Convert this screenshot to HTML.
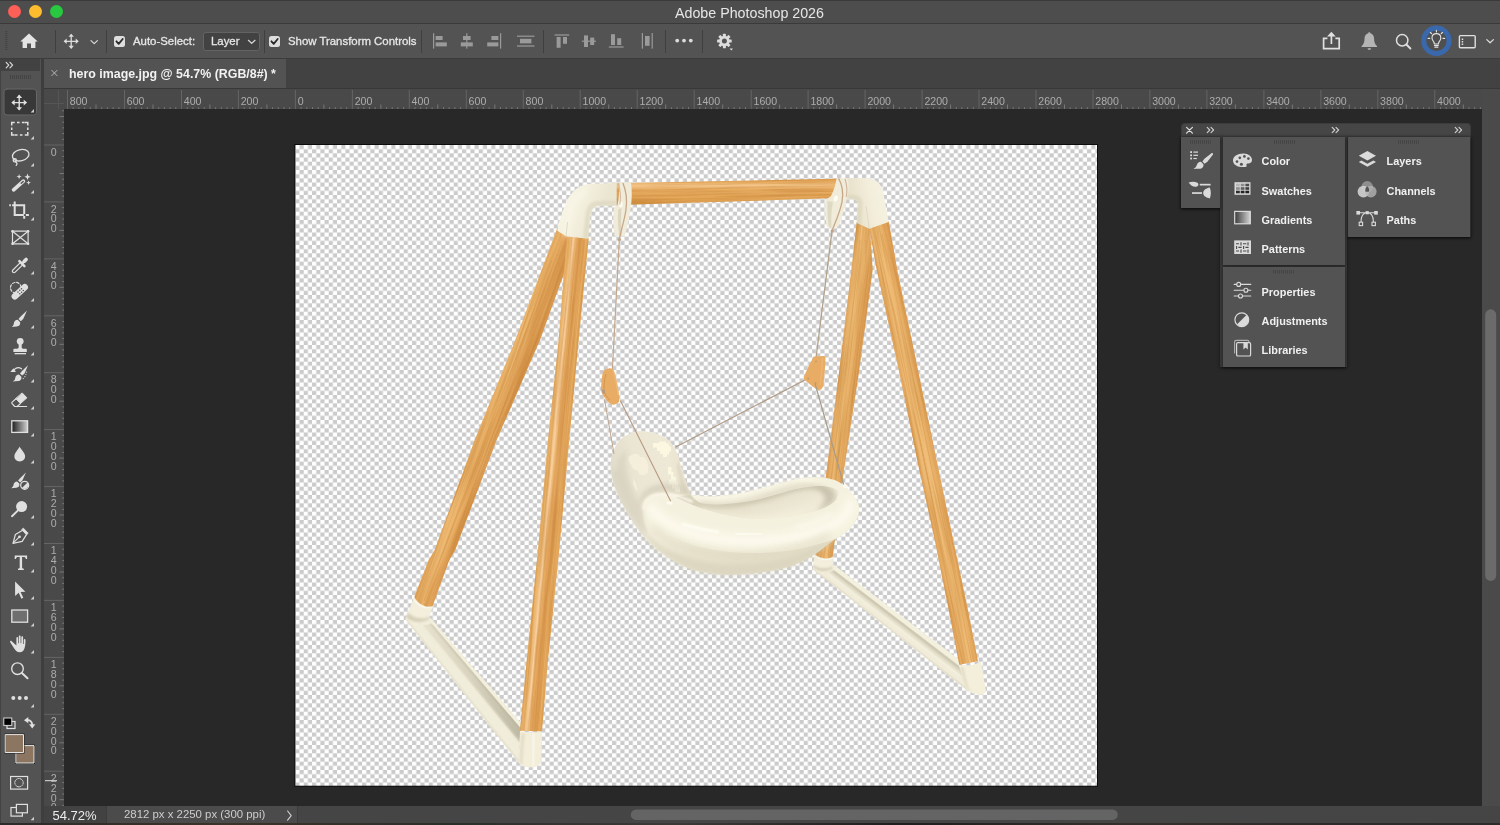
<!DOCTYPE html>
<html><head><meta charset="utf-8"><title>Adobe Photoshop 2026</title>
<style>
*{box-sizing:border-box;margin:0;padding:0}
html,body{width:1500px;height:825px;overflow:hidden;background:#282828;font-family:"Liberation Sans",sans-serif;}
.a{position:absolute}
svg{position:absolute;overflow:visible}
#titlebar{left:0;top:0;width:1500px;height:24px;background:#4d4d4d;border-top:1px solid #3a3a3a;border-bottom:1px solid #3a3a3a}
#title{left:675px;top:4.700px;color:#e6e6e6;font-size:14.25px;white-space:nowrap}
.tl{width:13px;height:13px;border-radius:50%;top:5px}
#optbar{left:0;top:24px;width:1500px;height:35px;background:#535353;border-bottom:1px solid #3c3c3c}
.vsep{width:1px;background:#3f3f3f;top:30px;height:23px}
.otext{color:#e6e6e6;font-size:11.4px;top:35px;white-space:nowrap;-webkit-text-stroke:0.3px #e6e6e6}
.cb{width:11px;height:11px;border-radius:2.5px;background:#dedede;top:36px}
#tabbar{left:40px;top:59px;width:1460px;height:30px;background:#424242;border-bottom:1px solid #383838}
#tab{left:44px;top:59px;width:242px;height:29px;background:#535353}
#tabtext{left:69px;top:66.700px;color:#f2f2f2;font-size:12.4px;font-weight:bold;white-space:nowrap}
#tools{left:0;top:59px;width:40.500px;height:766px;background:#535353;border-left:1px solid #424242}
#toolshead{left:0;top:59px;width:40px;height:12px;background:#424242}
#gap{left:40.500px;top:59px;width:3.500px;height:766px;background:#3e3e3e}
#hruler{left:44px;top:89px;width:1438px;height:20px;background:#494949}
#vruler{left:44px;top:109px;width:20px;height:697px;background:#494949}
#status{left:44px;top:806px;width:1456px;height:19px;background:#424242}
#vscroll{left:1482px;top:89px;width:18px;height:717px;background:#4a4a4a}
#root{position:absolute;left:0;top:0;width:1500px;height:825px;will-change:transform}
</style></head><body><div id="root">

<div id="titlebar" class="a"></div>
<div class="a tl" style="left:8px;background:#fe5f57"></div>
<div class="a tl" style="left:29px;background:#febc2e"></div>
<div class="a tl" style="left:50px;background:#28c840"></div>
<div id="title" class="a">Adobe Photoshop 2026</div>
<div id="optbar" class="a"></div>
<div class="a vsep" style="left:55px"></div>
<div class="a vsep" style="left:106px"></div>
<div class="a vsep" style="left:264px"></div>
<div class="a vsep" style="left:421px"></div>
<div class="a vsep" style="left:543px"></div>
<div class="a vsep" style="left:665px"></div>
<div class="a vsep" style="left:702px"></div>
<div class="a cb" style="left:114px"></div>
<div class="a otext" style="left:133px">Auto-Select:</div>
<div class="a" style="left:203px;top:32px;width:57px;height:19px;background:#424242;border:1px solid #636363;border-radius:3px"></div>
<div class="a otext" style="left:211px">Layer</div>
<div class="a cb" style="left:269px"></div>
<div class="a otext" style="left:288px">Show Transform Controls</div>
<div id="tabbar" class="a"></div><div id="tab" class="a"></div>
<div id="tabtext" class="a">hero image.jpg @ 54.7% (RGB/8#) *</div>
<div id="tools" class="a"></div><div id="toolshead" class="a"></div><div id="gap" class="a"></div>
<div id="hruler" class="a"></div><div id="vruler" class="a"></div>
<div id="vscroll" class="a"></div>
<div id="status" class="a"></div>

<svg class="a" style="left:0;top:0" width="1500" height="825" viewBox="0 0 1500 825">
<clipPath id="rc"><rect x="44" y="89" width="1438" height="717"/></clipPath><g clip-path="url(#rc)">
<path d="M44 103.500h20M58.500 90v19" stroke="#555" stroke-width="1" fill="none"/>
<path d="M67.5 90v19M124.5 90v19M181.5 90v19M238.4 90v19M295.4 90v19M352.4 90v19M409.3 90v19M466.3 90v19M523.3 90v19M580.2 90v19M637.2 90v19M694.2 90v19M751.2 90v19M808.1 90v19M865.1 90v19M922.1 90v19M979.0 90v19M1036.0 90v19M1093.0 90v19M1149.9 90v19M1206.9 90v19M1263.9 90v19M1320.9 90v19M1377.8 90v19M1434.8 90v19M44 145.0h20M44 201.9h20M44 258.9h20M44 315.8h20M44 372.7h20M44 429.6h20M44 486.6h20M44 543.5h20M44 600.4h20M44 657.4h20M44 714.3h20M44 771.2h20" stroke="#656565" stroke-width="1" fill="none"/>
<path d="M96.0 109v-4.5M153.0 109v-4.5M209.9 109v-4.5M266.9 109v-4.5M323.9 109v-4.5M380.9 109v-4.5M437.8 109v-4.5M494.8 109v-4.5M551.8 109v-4.5M608.7 109v-4.5M665.7 109v-4.5M722.7 109v-4.5M779.6 109v-4.5M836.6 109v-4.5M893.6 109v-4.5M950.6 109v-4.5M1007.5 109v-4.5M1064.5 109v-4.5M1121.5 109v-4.5M1178.4 109v-4.5M1235.4 109v-4.5M1292.4 109v-4.5M1349.3 109v-4.5M1406.3 109v-4.5M1463.3 109v-4.5M64 116.5h-4.5M64 173.5h-4.5M64 230.4h-4.5M64 287.3h-4.5M64 344.3h-4.5M64 401.2h-4.5M64 458.1h-4.5M64 515.0h-4.5M64 572.0h-4.5M64 628.9h-4.5M64 685.8h-4.5M64 742.8h-4.5M64 799.7h-4.5" stroke="#777" stroke-width="1" fill="none"/>
<path d="M73.2 109v-1.7M78.9 109v-1.7M84.6 109v-1.7M90.3 109v-1.7M101.7 109v-1.7M107.4 109v-1.7M113.1 109v-1.7M118.8 109v-1.7M130.2 109v-1.7M135.9 109v-1.7M141.6 109v-1.7M147.3 109v-1.7M158.7 109v-1.7M164.4 109v-1.7M170.1 109v-1.7M175.8 109v-1.7M187.2 109v-1.7M192.9 109v-1.7M198.6 109v-1.7M204.2 109v-1.7M215.6 109v-1.7M221.3 109v-1.7M227.0 109v-1.7M232.7 109v-1.7M244.1 109v-1.7M249.8 109v-1.7M255.5 109v-1.7M261.2 109v-1.7M272.6 109v-1.7M278.3 109v-1.7M284.0 109v-1.7M289.7 109v-1.7M301.1 109v-1.7M306.8 109v-1.7M312.5 109v-1.7M318.2 109v-1.7M329.6 109v-1.7M335.3 109v-1.7M341.0 109v-1.7M346.7 109v-1.7M358.1 109v-1.7M363.8 109v-1.7M369.5 109v-1.7M375.2 109v-1.7M386.6 109v-1.7M392.2 109v-1.7M397.9 109v-1.7M403.6 109v-1.7M415.0 109v-1.7M420.7 109v-1.7M426.4 109v-1.7M432.1 109v-1.7M443.5 109v-1.7M449.2 109v-1.7M454.9 109v-1.7M460.6 109v-1.7M472.0 109v-1.7M477.7 109v-1.7M483.4 109v-1.7M489.1 109v-1.7M500.5 109v-1.7M506.2 109v-1.7M511.9 109v-1.7M517.6 109v-1.7M529.0 109v-1.7M534.7 109v-1.7M540.4 109v-1.7M546.1 109v-1.7M557.5 109v-1.7M563.2 109v-1.7M568.9 109v-1.7M574.6 109v-1.7M585.9 109v-1.7M591.6 109v-1.7M597.3 109v-1.7M603.0 109v-1.7M614.4 109v-1.7M620.1 109v-1.7M625.8 109v-1.7M631.5 109v-1.7M642.9 109v-1.7M648.6 109v-1.7M654.3 109v-1.7M660.0 109v-1.7M671.4 109v-1.7M677.1 109v-1.7M682.8 109v-1.7M688.5 109v-1.7M699.9 109v-1.7M705.6 109v-1.7M711.3 109v-1.7M717.0 109v-1.7M728.4 109v-1.7M734.1 109v-1.7M739.8 109v-1.7M745.5 109v-1.7M756.9 109v-1.7M762.6 109v-1.7M768.3 109v-1.7M773.9 109v-1.7M785.3 109v-1.7M791.0 109v-1.7M796.7 109v-1.7M802.4 109v-1.7M813.8 109v-1.7M819.5 109v-1.7M825.2 109v-1.7M830.9 109v-1.7M842.3 109v-1.7M848.0 109v-1.7M853.7 109v-1.7M859.4 109v-1.7M870.8 109v-1.7M876.5 109v-1.7M882.2 109v-1.7M887.9 109v-1.7M899.3 109v-1.7M905.0 109v-1.7M910.7 109v-1.7M916.4 109v-1.7M927.8 109v-1.7M933.5 109v-1.7M939.2 109v-1.7M944.9 109v-1.7M956.3 109v-1.7M961.9 109v-1.7M967.6 109v-1.7M973.3 109v-1.7M984.7 109v-1.7M990.4 109v-1.7M996.1 109v-1.7M1001.8 109v-1.7M1013.2 109v-1.7M1018.9 109v-1.7M1024.6 109v-1.7M1030.3 109v-1.7M1041.7 109v-1.7M1047.4 109v-1.7M1053.1 109v-1.7M1058.8 109v-1.7M1070.2 109v-1.7M1075.9 109v-1.7M1081.6 109v-1.7M1087.3 109v-1.7M1098.7 109v-1.7M1104.4 109v-1.7M1110.1 109v-1.7M1115.8 109v-1.7M1127.2 109v-1.7M1132.9 109v-1.7M1138.6 109v-1.7M1144.3 109v-1.7M1155.6 109v-1.7M1161.3 109v-1.7M1167.0 109v-1.7M1172.7 109v-1.7M1184.1 109v-1.7M1189.8 109v-1.7M1195.5 109v-1.7M1201.2 109v-1.7M1212.6 109v-1.7M1218.3 109v-1.7M1224.0 109v-1.7M1229.7 109v-1.7M1241.1 109v-1.7M1246.8 109v-1.7M1252.5 109v-1.7M1258.2 109v-1.7M1269.6 109v-1.7M1275.3 109v-1.7M1281.0 109v-1.7M1286.7 109v-1.7M1298.1 109v-1.7M1303.8 109v-1.7M1309.5 109v-1.7M1315.2 109v-1.7M1326.6 109v-1.7M1332.3 109v-1.7M1338.0 109v-1.7M1343.6 109v-1.7M1355.0 109v-1.7M1360.7 109v-1.7M1366.4 109v-1.7M1372.1 109v-1.7M1383.5 109v-1.7M1389.2 109v-1.7M1394.9 109v-1.7M1400.6 109v-1.7M1412.0 109v-1.7M1417.7 109v-1.7M1423.4 109v-1.7M1429.1 109v-1.7M1440.5 109v-1.7M1446.2 109v-1.7M1451.9 109v-1.7M1457.6 109v-1.7M1469.0 109v-1.7M1474.7 109v-1.7M1480.4 109v-1.7M64 110.8h-1.7M64 122.2h-1.7M64 127.9h-1.7M64 133.6h-1.7M64 139.3h-1.7M64 150.7h-1.7M64 156.4h-1.7M64 162.1h-1.7M64 167.8h-1.7M64 179.2h-1.7M64 184.9h-1.7M64 190.5h-1.7M64 196.2h-1.7M64 207.6h-1.7M64 213.3h-1.7M64 219.0h-1.7M64 224.7h-1.7M64 236.1h-1.7M64 241.8h-1.7M64 247.5h-1.7M64 253.2h-1.7M64 264.6h-1.7M64 270.2h-1.7M64 275.9h-1.7M64 281.6h-1.7M64 293.0h-1.7M64 298.7h-1.7M64 304.4h-1.7M64 310.1h-1.7M64 321.5h-1.7M64 327.2h-1.7M64 332.9h-1.7M64 338.6h-1.7M64 349.9h-1.7M64 355.6h-1.7M64 361.3h-1.7M64 367.0h-1.7M64 378.4h-1.7M64 384.1h-1.7M64 389.8h-1.7M64 395.5h-1.7M64 406.9h-1.7M64 412.6h-1.7M64 418.3h-1.7M64 424.0h-1.7M64 435.3h-1.7M64 441.0h-1.7M64 446.7h-1.7M64 452.4h-1.7M64 463.8h-1.7M64 469.5h-1.7M64 475.2h-1.7M64 480.9h-1.7M64 492.3h-1.7M64 498.0h-1.7M64 503.7h-1.7M64 509.4h-1.7M64 520.7h-1.7M64 526.4h-1.7M64 532.1h-1.7M64 537.8h-1.7M64 549.2h-1.7M64 554.9h-1.7M64 560.6h-1.7M64 566.3h-1.7M64 577.7h-1.7M64 583.4h-1.7M64 589.1h-1.7M64 594.7h-1.7M64 606.1h-1.7M64 611.8h-1.7M64 617.5h-1.7M64 623.2h-1.7M64 634.6h-1.7M64 640.3h-1.7M64 646.0h-1.7M64 651.7h-1.7M64 663.1h-1.7M64 668.8h-1.7M64 674.4h-1.7M64 680.1h-1.7M64 691.5h-1.7M64 697.2h-1.7M64 702.9h-1.7M64 708.6h-1.7M64 720.0h-1.7M64 725.7h-1.7M64 731.4h-1.7M64 737.1h-1.7M64 748.5h-1.7M64 754.2h-1.7M64 759.8h-1.7M64 765.5h-1.7M64 776.9h-1.7M64 782.6h-1.7M64 788.3h-1.7M64 794.0h-1.7M64 805.4h-1.7" stroke="#7c7c7c" stroke-width="1" fill="none"/>
<g fill="#acacac" font-size="10.600" font-family="Liberation Sans, sans-serif">
<text x="69.8" y="104.700">800</text>
<text x="126.8" y="104.700">600</text>
<text x="183.8" y="104.700">400</text>
<text x="240.7" y="104.700">200</text>
<text x="297.7" y="104.700">0</text>
<text x="354.7" y="104.700">200</text>
<text x="411.6" y="104.700">400</text>
<text x="468.6" y="104.700">600</text>
<text x="525.6" y="104.700">800</text>
<text x="582.5" y="104.700">1000</text>
<text x="639.5" y="104.700">1200</text>
<text x="696.5" y="104.700">1400</text>
<text x="753.5" y="104.700">1600</text>
<text x="810.4" y="104.700">1800</text>
<text x="867.4" y="104.700">2000</text>
<text x="924.4" y="104.700">2200</text>
<text x="981.3" y="104.700">2400</text>
<text x="1038.3" y="104.700">2600</text>
<text x="1095.3" y="104.700">2800</text>
<text x="1152.2" y="104.700">3000</text>
<text x="1209.2" y="104.700">3200</text>
<text x="1266.2" y="104.700">3400</text>
<text x="1323.2" y="104.700">3600</text>
<text x="1380.1" y="104.700">3800</text>
<text x="1437.1" y="104.700">4000</text>
<g text-anchor="middle">
<text x="53.800" y="155.7">0</text>
<text x="53.800" y="212.6">2</text>
<text x="53.800" y="222.4">0</text>
<text x="53.800" y="232.2">0</text>
<text x="53.800" y="269.6">4</text>
<text x="53.800" y="279.4">0</text>
<text x="53.800" y="289.2">0</text>
<text x="53.800" y="326.5">6</text>
<text x="53.800" y="336.3">0</text>
<text x="53.800" y="346.1">0</text>
<text x="53.800" y="383.4">8</text>
<text x="53.800" y="393.2">0</text>
<text x="53.800" y="403.0">0</text>
<text x="53.800" y="440.3">1</text>
<text x="53.800" y="450.1">0</text>
<text x="53.800" y="459.9">0</text>
<text x="53.800" y="469.7">0</text>
<text x="53.800" y="497.3">1</text>
<text x="53.800" y="507.1">2</text>
<text x="53.800" y="516.9">0</text>
<text x="53.800" y="526.7">0</text>
<text x="53.800" y="554.2">1</text>
<text x="53.800" y="564.0">4</text>
<text x="53.800" y="573.8">0</text>
<text x="53.800" y="583.6">0</text>
<text x="53.800" y="611.1">1</text>
<text x="53.800" y="620.9">6</text>
<text x="53.800" y="630.7">0</text>
<text x="53.800" y="640.5">0</text>
<text x="53.800" y="668.1">1</text>
<text x="53.800" y="677.9">8</text>
<text x="53.800" y="687.7">0</text>
<text x="53.800" y="697.5">0</text>
<text x="53.800" y="725.0">2</text>
<text x="53.800" y="734.8">0</text>
<text x="53.800" y="744.6">0</text>
<text x="53.800" y="754.4">0</text>
<text x="53.800" y="781.9">2</text>
<text x="53.800" y="791.7">2</text>
<text x="53.800" y="801.5">0</text>
<text x="53.800" y="811.3">0</text>
</g></g></g></svg>

<svg class="a" style="left:0;top:0" width="1500" height="825" viewBox="0 0 1500 825">
<defs>
<pattern id="chk" x="295.4" y="145" width="8.3333" height="8.3333" patternUnits="userSpaceOnUse">
<rect width="8.3333" height="8.3333" fill="#fff"/><rect x="4.1667" width="4.1667" height="4.1667" fill="#cbcbcb"/><rect y="4.1667" width="4.1667" height="4.1667" fill="#cbcbcb"/>
</pattern>
<clipPath id="cv"><rect x="295.4" y="145" width="801.6" height="640.7"/></clipPath>
<!-- wood gradients -->
<linearGradient id="wbar" x1="0" y1="0" x2="0.02" y2="1">
<stop offset="0" stop-color="#d69448"/><stop offset=".1" stop-color="#e8aa5c"/><stop offset=".27" stop-color="#f3c488"/><stop offset=".42" stop-color="#e9ad62"/><stop offset=".72" stop-color="#e2a456"/><stop offset=".92" stop-color="#d99848"/><stop offset="1" stop-color="#cb8a3c"/>
</linearGradient>
<linearGradient id="wfl" gradientUnits="userSpaceOnUse" x1="548" y1="440" x2="569.3" y2="442">
<stop offset="0" stop-color="#e2a458"/><stop offset=".14" stop-color="#ebb56c"/><stop offset=".3" stop-color="#f9d0a0"/><stop offset=".42" stop-color="#e7ab62"/><stop offset=".62" stop-color="#dc9b51"/><stop offset=".82" stop-color="#e7ac60"/><stop offset="1" stop-color="#e4a558"/>
</linearGradient>
<linearGradient id="wbl" gradientUnits="userSpaceOnUse" x1="474.7" y1="440" x2="495" y2="447.500">
<stop offset="0" stop-color="#e2a55a"/><stop offset=".2" stop-color="#ecb66e"/><stop offset=".45" stop-color="#e8ae64"/><stop offset=".7" stop-color="#e0a258"/><stop offset="1" stop-color="#d7964c"/>
</linearGradient>
<linearGradient id="wfr" gradientUnits="userSpaceOnUse" x1="919.3" y1="470" x2="938" y2="466">
<stop offset="0" stop-color="#e0a258"/><stop offset=".25" stop-color="#ebb46c"/><stop offset=".5" stop-color="#efbc76"/><stop offset=".75" stop-color="#e8af66"/><stop offset="1" stop-color="#de9f54"/>
</linearGradient>
<linearGradient id="wbr" gradientUnits="userSpaceOnUse" x1="839.3" y1="370" x2="859" y2="372.300">
<stop offset="0" stop-color="#e0a35a"/><stop offset=".3" stop-color="#ecb972"/><stop offset=".55" stop-color="#e9b26a"/><stop offset=".8" stop-color="#e0a45a"/><stop offset="1" stop-color="#d89a50"/>
</linearGradient>
<!-- cream gradients -->
<linearGradient id="cel" gradientUnits="userSpaceOnUse" x1="560" y1="200" x2="600" y2="215">
<stop offset="0" stop-color="#f8f5e7"/><stop offset=".45" stop-color="#f5f1df"/><stop offset="1" stop-color="#ebe6d2"/>
</linearGradient>
<linearGradient id="cer" gradientUnits="userSpaceOnUse" x1="855" y1="205" x2="888" y2="198">
<stop offset="0" stop-color="#e9e3cd"/><stop offset=".5" stop-color="#f3eedb"/><stop offset="1" stop-color="#f6f2e2"/>
</linearGradient>
<linearGradient id="seatg" gradientUnits="userSpaceOnUse" x1="700" y1="490" x2="720" y2="580">
<stop offset="0" stop-color="#f4f0de"/><stop offset=".4" stop-color="#f5f1df"/><stop offset=".62" stop-color="#ece7d2"/><stop offset="1" stop-color="#e2dcc6"/>
</linearGradient>
<linearGradient id="bowlg" gradientUnits="userSpaceOnUse" x1="760" y1="483" x2="772" y2="520">
<stop offset="0" stop-color="#d8d2bb"/><stop offset=".45" stop-color="#e6e1cc"/><stop offset="1" stop-color="#f0ebd8"/>
</linearGradient>
<linearGradient id="lobeg" gradientUnits="userSpaceOnUse" x1="612" y1="470" x2="690" y2="455">
<stop offset="0" stop-color="#e2ddcb"/><stop offset=".3" stop-color="#ebe6d4"/><stop offset=".7" stop-color="#eee9d6"/><stop offset="1" stop-color="#e8e1cb"/>
</linearGradient>
<filter id="b0" x="-20%" y="-20%" width="140%" height="140%"><feGaussianBlur stdDeviation="0.600"/></filter>
<filter id="b1" x="-20%" y="-20%" width="140%" height="140%"><feGaussianBlur stdDeviation="1.2"/></filter>
<filter id="b2" x="-20%" y="-20%" width="140%" height="140%"><feGaussianBlur stdDeviation="2.500"/></filter>
<filter id="b4" x="-30%" y="-30%" width="160%" height="160%"><feGaussianBlur stdDeviation="4.500"/></filter>
</defs>
<rect x="294.400" y="144" width="803.600" height="642.700" fill="#0c0c0c"/>
<rect x="295.400" y="145" width="801.600" height="640.700" fill="url(#chk)"/>
<g clip-path="url(#cv)">
<defs><filter id="grain" x="0" y="0" width="100%" height="100%" color-interpolation-filters="sRGB"><feTurbulence type="fractalNoise" baseFrequency="0.55 0.012" numOctaves="2" seed="7"/><feColorMatrix type="matrix" values="0 0 0 0 0.72  0 0 0 0 0.46  0 0 0 0 0.16  1.9 0 0 0 -0.78"/></filter><filter id="grainL" x="0" y="0" width="100%" height="100%" color-interpolation-filters="sRGB"><feTurbulence type="fractalNoise" baseFrequency="0.4 0.01" numOctaves="2" seed="23"/><feColorMatrix type="matrix" values="0 0 0 0 0.98  0 0 0 0 0.84  0 0 0 0 0.62  1.8 0 0 0 -0.85"/></filter><clipPath id="cwbl"><path d="M558 226L568 232 566 268 540 340 496.700 440 455.300 550 449.300 560 432.700 606c-7 2-15-2-18.400-9.300L428.700 560 434.700 550 474.700 440 515.300 340z"/></clipPath><clipPath id="cwbr"><path d="M856.700 222L870 228 872.700 270 859.300 370 844 470 832.700 556.700c-5.500 3-13 2-18-2.700L826.700 470 839.300 370 851.300 270z"/></clipPath><clipPath id="cwfl"><path d="M566.700 236L588.700 238 578.700 340 569.300 440 559.300 550 548 660 542 731.500 520 730.700 526.700 660 538 550 548 440 558.700 340z"/></clipPath><clipPath id="cwfr"><path d="M869.300 228L888.700 221 897.300 270 918 370 938.700 470 953.300 540 968 610 978 661.300 959.300 664.700 948.700 610 934.700 540 919.300 470 898.700 370 876.700 270z"/></clipPath><clipPath id="cwbar"><path d="M612 183.300L836.500 178.700c1.600 0 2 1.500 2 3L838.300 196c0 1.400-.6 2-2 2.100L612 205.200z"/></clipPath></defs>
<!-- ===== back-left base beam (cream) ===== -->
<g>
<path d="M405.3 619.3L518.7 762.7L520.7 722.7L429.3 616.7z" fill="#f1eddb"/>
<linearGradient id="lgr" gradientUnits="userSpaceOnUse" x1="425" y1="622" x2="516" y2="735"><stop offset="0" stop-color="#e6e1cd"/><stop offset=".5" stop-color="#d8d3be"/><stop offset="1" stop-color="#bfbaa4"/></linearGradient>
<path d="M423.4 625.5L519.7 742.7L520.4 727.9L431.8 623.7z" fill="url(#lgr)"/>
<path d="M422.5 625.7L519.6 744.3L519.8 741.1L424.4 625.3z" fill="#ebe6d2" opacity=".8" filter="url(#b1)"/>
<path d="M430.2 624.0L520.3 730.7L520.5 727.5L432.1 623.6z" fill="#b5b09a" opacity=".55" filter="url(#b1)"/>
<path d="M428.3 619.2L520.5 727.5L520.7 722.7L431.1 618.8z" fill="#f3efdd"/>
<path d="M405.3 619.3L518.7 762.7L518.9 759.5L407.2 619.1z" fill="#e4dfca" opacity=".7"/>
<path d="M414.300 596.700L405.300 619.300 416 625.500 429.300 616.700 433.300 605.300c-6 3.500-14 0-19-8.600z" fill="#f3efdc"/>
<path d="M408 612.500c6.500 6 14.500 7.500 22 4l-.7 2.200c-7 5-16 4.500-23.500-1.200z" fill="#d2ccb5" opacity=".85" filter="url(#b1)"/>
<path d="M414 599.500c4 6.500 11 9.500 18 7.500" stroke="#faf7ea" stroke-width="1.600" fill="none" opacity=".9"/>
</g>
<!-- ===== back-left leg (wood) ===== -->
<path d="M558 226L568 232 566 268 540 340 496.700 440 455.300 550 449.300 560 432.700 606c-7 2-15-2-18.400-9.300L428.700 560 434.700 550 474.700 440 515.300 340z" fill="url(#wbl)"/>
<g clip-path="url(#cwbl)"><rect x="395.0" y="210.0" width="200" height="420" transform="rotate(20.5 495 420)" filter="url(#grain)" opacity=".55"/><rect x="395.0" y="210.0" width="200" height="420" transform="rotate(20.5 495 420)" filter="url(#grainL)" opacity=".35"/></g>
<g stroke="#cf8f44" stroke-width=".8" opacity=".45" fill="none"><path d="M552 260L523 340 484 440 444 550 424 601"/><path d="M560 262L531 342 490 442 450 552 429 604"/><path d="M545 262L519 340"/></g>
<path d="M563 266L537 340 493.500 440 452 550" stroke="#c98a40" stroke-width="1.600" opacity=".45" fill="none"/>
<!-- ===== right-back beam (cream) ===== -->
<g>
<path d="M812.7 569.3L966.7 690.0L958.7 659.5L832.7 564.0z" fill="#f0ecd9"/>
<path d="M828.2 572.6L963.3 677.2L960.9 668.0L833.8 570.6z" fill="#e3dec9"/>
<path d="M831.9 571.3L961.7 671.1L960.6 666.8L834.5 570.3z" fill="#b9b39c" opacity=".7" filter="url(#b1)"/>
<path d="M830.6 567.3L960.6 666.8L958.7 659.5L835.2 565.9z" fill="#f4f0de"/>
<path d="M812.7 569.3L966.7 690.0L965.9 687.0L814.7 568.8z" fill="#e2ddc8" opacity=".7"/>
<path d="M827.1 573.0L963.8 679.0L963.2 676.6L828.6 572.4z" fill="#f7f4e4" opacity=".8" filter="url(#b1)"/>
<path d="M814.700 554L812.700 569.300 823 574.500 832.700 564 832.700 556.700c-5 3-13 1.500-18-2.700z" fill="#f3efdc"/>
<path d="M813.500 565c5.500 4 12.500 4.500 19 1.200l0 1.800c-6 4.500-13.500 4-19.600-.5z" fill="#d0cab3" opacity=".85" filter="url(#b1)"/>
<path d="M815 556c4.500 3.500 11.500 4.500 17.500 2.200" stroke="#faf7ea" stroke-width="1.400" fill="none" opacity=".9"/>
</g>
<!-- ===== right-back leg (wood) ===== -->
<path d="M856.700 222L870 228 872.700 270 859.300 370 844 470 832.700 556.700c-5.500 3-13 2-18-2.700L826.700 470 839.300 370 851.300 270z" fill="url(#wbr)"/>
<g clip-path="url(#cwbr)"><rect x="800.0" y="200.0" width="90" height="380" transform="rotate(6.5 845 390)" filter="url(#grain)" opacity=".55"/><rect x="800.0" y="200.0" width="90" height="380" transform="rotate(6.5 845 390)" filter="url(#grainL)" opacity=".35"/></g>
<g stroke="#cf8f44" stroke-width=".8" opacity=".45" fill="none"><path d="M860 240L857.500 270 845 370 832 470 820 553"/><path d="M866 240L866 270 853 370 839 470 828 556"/></g>
<!-- ===== front-left leg (wood) ===== -->
<path d="M566.700 236L588.700 238 578.700 340 569.300 440 559.300 550 548 660 542 731.500 520 730.700 526.700 660 538 550 548 440 558.700 340z" fill="url(#wfl)"/>
<g clip-path="url(#cwfl)"><rect x="500.0" y="220.0" width="110" height="530" transform="rotate(5.2 555 485)" filter="url(#grain)" opacity=".55"/><rect x="500.0" y="220.0" width="110" height="530" transform="rotate(5.2 555 485)" filter="url(#grainL)" opacity=".35"/></g>
<g stroke="#cc8b42" stroke-width=".8" opacity=".4" fill="none"><path d="M580 240L571 340 561.500 440 551.500 550 540 660 534.500 731"/><path d="M584 240L575 340 565.500 440 555.500 550 544 660 538.500 731"/></g>
<!-- front-left cap -->
<path d="M520 730.700c7 2.600 15 2.800 22 .8L540.700 762.700c-1.500 3.500-6 5-10 4.600-5-.2-10.500-2-12-4.600z" fill="#f3eeda"/>
<path d="M521.500 733c-1 10-1.500 20-2 29.500l3 2.500c.5-11 1.200-21 2.500-31.500z" fill="#dcd6bf" opacity=".7" filter="url(#b1)"/>
<path d="M534 733c-1 11-1.500 22-1.500 33.500" stroke="#fbf8ea" stroke-width="3" opacity=".8" filter="url(#b1)" fill="none"/>
<!-- ===== right-front leg (wood) ===== -->
<path d="M869.300 228L888.700 221 897.300 270 918 370 938.700 470 953.300 540 968 610 978 661.300 959.300 664.700 948.700 610 934.700 540 919.300 470 898.700 370 876.700 270z" fill="url(#wfr)"/>
<g clip-path="url(#cwfr)"><rect x="860.0" y="200.0" width="130" height="490" transform="rotate(-12 925 445)" filter="url(#grain)" opacity=".55"/><rect x="860.0" y="200.0" width="130" height="490" transform="rotate(-12 925 445)" filter="url(#grainL)" opacity=".35"/></g>
<g stroke="#cc8b42" stroke-width=".8" opacity=".4" fill="none"><path d="M876 236L884 270 905.500 370 926 470 941 540 955.500 610 965.500 663"/><path d="M882 234L890.500 270 911.500 370 932 470 947 540 961.500 610 971.500 662"/></g>
<!-- right-front cap -->
<path d="M958.700 665c7 1.500 15 .5 22-3.200L986 691.300c-1 2.500-3.500 3.600-6 3.400-5-.5-10-2-13.300-4.700z" fill="#f4efdb"/>
<path d="M960 667.500c2 8 4.500 15.500 7.500 22.500l2.500 1.500c-3-8-5-16-6.500-24.200z" fill="#dbd5bd" opacity=".7" filter="url(#b1)"/>
<!-- ===== top bar ===== -->
<path d="M612 183.300L836.500 178.700c1.600 0 2 1.500 2 3L838.300 196c0 1.400-.6 2-2 2.100L612 205.200z" fill="url(#wbar)"/>
<g clip-path="url(#cwbar)"><rect x="600.0" y="57.0" width="250" height="270" transform="rotate(88.8 725 192)" filter="url(#grain)" opacity=".55"/><rect x="600.0" y="57.0" width="250" height="270" transform="rotate(88.8 725 192)" filter="url(#grainL)" opacity=".35"/></g>
<g stroke="#d08e42" stroke-width=".7" opacity=".4" fill="none"><path d="M630 190.500L836 186"/><path d="M630 196L836 191.500"/><path d="M630 200.500L836 195"/></g>
<!-- ===== left elbow ===== -->
<path d="M616.700 183L590.700 183.700c-12 .8-20.500 8-25.700 21.300L558 225.300 557.300 230.700 566 236.300 588 238.800 590.300 216c.8-6.500 3.500-9.800 8.200-10L616.700 205.300z" fill="url(#cel)"/>
<path d="M616.700 205.300L598.500 206c-4.700.2-7.400 3.500-8.200 10L588 238.800 583 238.200 585.500 214c1-8.500 5-12.500 12-13l19.200-.7z" fill="#d8d2ba" opacity=".55" filter="url(#b1)"/>
<path d="M566 236.300L569.500 213c2-11 8-18.500 17-21" stroke="#faf7ea" stroke-width="5" opacity=".7" fill="none" filter="url(#b2)"/>
<path d="M566 236.300L567.500 222" stroke="#d9d3bc" stroke-width="1" opacity=".8" fill="none"/>
<!-- ===== right elbow ===== -->
<path d="M846.700 178.300L866.700 178c9.500.8 14.500 5.600 16.500 14L888.700 222 869.300 228.700 856.700 222.700 858 204c-.3-3.800-3.800-5.200-10-5.300L846.700 198.700z" fill="url(#cer)"/>
<path d="M846.700 198.700L848 198.700c6.200.1 9.700 1.500 10 5.300L856.700 222.700 861 224.500 862.500 203c-.5-6-5-8.500-13.500-8.600L846.700 194.400z" fill="#d6d0b8" opacity=".55" filter="url(#b1)"/>
<path d="M869.300 228.700L866 206" stroke="#dcd6bf" stroke-width="1" opacity=".8" fill="none"/>
<!-- ===== hooks / straps ===== -->
<g>
<path d="M619.600 182.600c3.500-.6 8-.6 11.400 0 1.200 8 1 17-.300 25.500-1.200 9-3.500 19-6 28.200L614.700 236.300c-1.500-9-2-19-.700-28.200l3.500-3c1.500-7.500 2-15 2.100-22.500z" fill="#f1ecd9"/>
<path d="M621.500 208l-3.200 1.500c-.8 8.500-.3 17.500 1 26.500l2.500 0c-.9-9.500-1-19-.3-28z" fill="#d8d2ba" opacity=".8"/>
<ellipse cx="620.800" cy="204.300" rx="1.800" ry="3" fill="#fdfcf5"/>
<path d="M622.900 183c3.800 9 4.300 18 3 27-1.200 9-4.500 19-6.500 29" stroke="#c6a78a" stroke-width="1.300" fill="none"/>
<path d="M618.400 183.600c2.200 7 2.400 14 1.500 21" stroke="#cdb49a" stroke-width="1" fill="none"/>
<circle cx="619.400" cy="239.600" r="1.700" fill="#c4a68a"/>
</g>
<g>
<path d="M836.600 178.500c3.600-1 8-1 11.400.5 1.200 7 .5 14-1.500 21-2 9-5 18-8 26.600l-6.500 2.200L826.700 226.700c-1.400-9-1.800-18-1.400-26.600l5.300-3.500c3-5.500 5-11.500 6-18.100z" fill="#f1ecd9"/>
<path d="M833 202l-5.500-1c-.4 8.500 0 17 1.200 25.500l2.800 1.800c-.5-9-.3-18 1.500-26.300z" fill="#dad4bc" opacity=".8"/>
<ellipse cx="835.800" cy="198.500" rx="2" ry="3" fill="#fdfcf5" transform="rotate(20 835.800 198.500)"/>
<path d="M838.600 178.400c4 7 4.800 15 3.500 23-1.500 9-6 19-9.800 28.500" stroke="#c6a78a" stroke-width="1.300" fill="none"/>
<path d="M845 178.800c2 6 2.400 12 1.300 18" stroke="#cdb49a" stroke-width="1.100" fill="none"/>
<circle cx="832.200" cy="231" r="1.700" fill="#c4a68a"/>
</g>
<!-- ===== ropes (hook to wedge) ===== -->
<path d="M619.300 240L612.400 369" stroke="#c4a88e" stroke-width="1.200"/>
<path d="M832 231L816 358" stroke="#b3a28e" stroke-width="1.300"/>
<!-- rope C: right wedge to lobe (behind lobe end) -->
<path d="M807.300 378.700L675.300 447.300" stroke="#b09c86" stroke-width="1.150"/>
<!-- ===== seat ===== -->
<g>
<path d="M690.0 494.7C693.3 495.0 702.2 496.8 710.0 496.7C717.8 496.6 729.0 495.1 736.7 494.0C744.4 492.9 748.6 491.9 756.4 490.0C764.2 488.1 776.0 484.7 783.6 482.7C791.2 480.7 795.7 479.1 801.8 478.2C807.9 477.3 814.2 476.9 820.0 477.3C825.8 477.8 831.9 479.1 836.4 480.9C840.9 482.7 844.0 485.0 847.3 488.2C850.6 491.4 854.4 496.5 856.4 500.0C858.4 503.5 859.1 505.8 859.1 509.1C859.1 512.4 858.4 516.4 856.4 520.0C854.4 523.6 850.6 527.9 847.3 530.9C844.0 533.9 839.4 536.1 836.4 538.2C833.4 540.3 832.8 540.9 829.1 543.6C825.5 546.3 820.6 550.9 814.5 554.5C808.4 558.1 800.9 562.6 792.7 565.5C784.5 568.4 773.7 570.4 765.5 571.8C757.3 573.2 750.3 573.5 743.3 574.0C736.3 574.5 731.1 575.2 723.3 574.7C715.5 574.2 704.5 572.7 696.7 570.7C688.9 568.7 683.4 566.3 676.7 562.7C670.0 559.1 662.3 553.8 656.7 549.3C651.1 544.8 647.8 541.3 643.3 536.0C638.8 530.7 634.1 524.0 630.0 517.3C625.9 510.6 621.6 502.2 618.7 496.0C615.8 489.8 614.0 485.4 612.7 480.0C611.4 474.6 610.5 468.3 610.7 463.3C610.9 458.3 612.3 454.0 614.0 450.0C615.7 446.0 617.6 442.2 620.7 439.3C623.8 436.4 628.9 434.0 632.7 432.7C636.5 431.4 638.9 431.0 643.3 431.3C647.7 431.6 654.8 432.9 659.3 434.7C663.8 436.5 667.0 438.8 670.0 442.0C673.0 445.2 675.3 449.3 677.3 454.0C679.3 458.7 680.1 464.0 682.0 470.0C683.9 476.0 687.4 485.9 688.7 490.0C690.0 494.1 689.8 493.9 690.0 494.7z" fill="url(#seatg)"/>
<path d="M648.0 534.0C650.3 536.0 656.0 542.3 662.0 546.0C668.0 549.7 675.7 553.2 684.0 556.0C692.3 558.8 702.3 561.2 712.0 562.5C721.7 563.8 732.0 564.2 742.0 564.0C752.0 563.8 762.3 562.8 772.0 561.0C781.7 559.2 791.7 556.4 800.0 553.5C808.3 550.6 815.9 546.0 822.0 543.5C828.1 541.0 835.2 538.2 836.4 538.2C837.6 538.2 832.8 540.9 829.1 543.6C825.5 546.3 820.6 550.9 814.5 554.5C808.4 558.1 800.9 562.6 792.7 565.5C784.5 568.4 773.7 570.4 765.5 571.8C757.3 573.2 750.3 573.5 743.3 574.0C736.3 574.5 731.1 575.2 723.3 574.7C715.5 574.2 704.5 572.7 696.7 570.7C688.9 568.7 683.4 566.3 676.7 562.7C670.0 559.1 662.3 553.8 656.7 549.3C651.1 544.8 645.5 538.2 643.3 536.0z" fill="#d9d3bd" opacity=".75" filter="url(#b2)"/>
<path d="M690.0 494.7C693.3 495.0 702.2 496.8 710.0 496.7C717.8 496.6 729.0 495.1 736.7 494.0C744.4 492.9 748.6 491.9 756.4 490.0C764.2 488.1 776.0 484.7 783.6 482.7C791.2 480.7 795.7 479.1 801.8 478.2C807.9 477.3 814.9 477.0 820.0 477.3C825.1 477.6 830.6 479.7 832.7 480.2C833.6 481.3 837.1 484.6 838.0 487.0C838.9 489.4 838.8 492.0 838.2 494.5C837.6 497.0 837.2 499.4 834.5 501.8C831.8 504.2 827.2 507.0 821.8 509.1C816.3 511.2 809.7 513.0 801.8 514.5C793.9 516.0 783.1 517.5 774.5 518.2C765.9 518.9 758.5 519.3 750.0 518.7C741.5 518.1 732.2 516.7 723.3 514.7C714.4 512.7 703.9 509.2 696.7 506.7C689.5 504.2 683.6 501.1 680.0 499.5C676.4 497.9 676.1 497.7 675.3 497.3L690 494.7z" fill="url(#bowlg)"/>
<path d="M704 499c12 2.500 26 2 40-1 14-3 28-8 42-12.500 9-3 19-4 28-3 8 1 13 4 15 8.500-4-2.500-10-3.500-17-3-10 .5-21 3.500-33 8-14 5-28 8.500-42 9-12 .5-23-1.500-33-6z" fill="#c4bea8" opacity=".7" filter="url(#b2)"/>
<path d="M812 485c7-1 13 .5 18 3.500 4 2.500 6 6 5.500 9.500-.5 3.500-3.500 6.500-8 9-3 1.500-7 3-12 4 5-3.500 8.500-7.500 9-12 .5-5-4-10-12.500-14z" fill="#bdb7a2" opacity=".7" filter="url(#b2)"/>
<path d="M700 508c16 6 34 9.500 52 10 18 .5 36-1.500 52-6" stroke="#f4efda" stroke-width="4" fill="none" opacity=".8" filter="url(#b2)"/>
<path d="M642.7 506.7C643.5 505.0 645.0 499.0 647.3 496.7C649.6 494.4 653.6 493.5 656.7 492.7C659.8 491.9 662.9 491.2 666.0 492.0C669.1 492.8 670.2 494.9 675.3 497.3C680.4 499.8 688.7 503.8 696.7 506.7C704.7 509.6 714.4 512.7 723.3 514.7C732.2 516.7 741.5 518.1 750.0 518.7C758.5 519.3 765.9 518.9 774.5 518.2C783.1 517.5 793.9 516.0 801.8 514.5C809.7 513.0 816.3 511.2 821.8 509.1C827.2 507.0 831.8 504.2 834.5 501.8C837.2 499.4 837.6 497.0 838.2 494.5C838.8 492.0 838.9 489.4 838.0 487.0C837.1 484.6 833.0 481.2 832.7 480.2C832.4 479.2 834.0 479.6 836.4 480.9C838.8 482.2 844.0 485.0 847.3 488.2C850.6 491.4 854.4 496.5 856.4 500.0C858.4 503.5 858.6 507.6 859.1 509.1C858.6 510.9 858.4 516.4 856.4 520.0C854.4 523.6 850.6 527.9 847.3 530.9C844.0 533.9 841.8 535.9 836.4 538.2C831.0 540.6 822.7 543.0 815.0 545.0C807.3 547.0 799.2 549.2 790.0 550.5C780.8 551.8 770.0 552.8 760.0 553.0C750.0 553.2 740.0 553.0 730.0 552.0C720.0 551.0 709.0 549.3 700.0 547.0C691.0 544.7 683.0 541.5 676.0 538.0C669.0 534.5 662.8 530.0 658.0 526.0C653.2 522.0 649.5 517.2 647.0 514.0C644.5 510.8 643.4 507.9 642.7 506.7z" fill="#f5f1df"/>
<path d="M690.0 494.7C693.3 495.0 702.2 496.8 710.0 496.7C717.8 496.6 729.0 495.1 736.7 494.0C744.4 492.9 748.6 491.9 756.4 490.0C764.2 488.1 776.0 484.7 783.6 482.7C791.2 480.7 795.7 479.1 801.8 478.2C807.9 477.3 814.9 477.0 820.0 477.3C825.1 477.6 830.6 479.7 832.7 480.2C833.5 481.2 836.5 484.2 837.5 486.0C838.5 487.8 839.2 490.7 838.5 491.0C837.8 491.3 835.4 488.8 833.0 488.0C830.6 487.2 827.5 486.4 824.0 486.2C820.5 485.9 816.7 486.0 812.0 486.5C807.3 487.0 801.7 487.8 796.0 489.0C790.3 490.2 784.3 492.2 778.0 494.0C771.7 495.8 764.8 498.0 758.0 499.5C751.2 501.0 744.3 502.2 737.0 503.0C729.7 503.8 720.2 504.6 714.0 504.5C707.8 504.4 704.0 504.1 700.0 502.5C696.0 500.9 691.7 496.0 690.0 494.7z" fill="#f5f1df"/>
<path d="M700 503.500c12 2.500 24 2.500 37 .5 14-2.500 28-7.500 42-12 12-4 24-6.500 34-5.500 8 .8 14 3.500 18 7.500" stroke="#cbc5ae" stroke-width="3.500" fill="none" opacity=".7" filter="url(#b2)"/>
<path d="M694 496.500c14 2 28 1.500 42-.8 14-2.600 28-7.200 42-11.800 12-4 24-5.500 36-4.500" stroke="#fbf8ea" stroke-width="2" fill="none" opacity=".8" filter="url(#b1)"/>
<path d="M650.0 508.0C652.0 509.8 656.7 515.3 662.0 519.0C667.3 522.7 674.7 527.0 682.0 530.0C689.3 533.0 697.7 535.2 706.0 537.0C714.3 538.8 723.0 539.8 732.0 540.5C741.0 541.2 750.3 541.4 760.0 541.0C769.7 540.6 780.8 539.5 790.0 538.0C799.2 536.5 807.3 534.5 815.0 532.0C822.7 529.5 830.5 526.3 836.0 523.0C841.5 519.7 845.7 515.3 848.0 512.0C850.3 508.7 849.7 504.5 850.0 503.0" stroke="#fffdf2" stroke-width="9" fill="none" opacity=".95" filter="url(#b4)" stroke-linecap="round"/>
<path d="M652 528c10 10 26 18 46 23 22 5 46 6 70 3 24-3 46-9.500 62-19" stroke="#d9d3bc" stroke-width="6" fill="none" opacity=".7" filter="url(#b4)"/>
<path d="M683.300 524c10 3.500 22 6 34.700 8" stroke="#fffef6" stroke-width="2.400" fill="none" opacity=".95" filter="url(#b1)" stroke-linecap="round"/>
<path d="M736.700 533.300c8 .9 16 1.300 24 1.400" stroke="#fffef6" stroke-width="2.200" fill="none" opacity=".95" filter="url(#b1)" stroke-linecap="round"/>
<path d="M796 527c12-2.500 24-7 34-13" stroke="#fffef6" stroke-width="3" fill="none" opacity=".65" filter="url(#b2)" stroke-linecap="round"/>
<path d="M690.0 494.7C687.7 494.5 680.0 493.9 676.0 493.5C672.0 493.1 669.2 492.1 666.0 492.0C662.8 491.9 659.8 491.9 656.7 492.7C653.6 493.5 649.6 494.4 647.3 496.7C645.0 499.0 643.3 502.8 642.7 506.7C642.1 510.6 642.6 515.5 643.5 520.0C644.4 524.5 648.0 531.3 648.0 534.0C648.0 536.7 646.3 538.8 643.3 536.0C640.3 533.2 634.1 524.0 630.0 517.3C625.9 510.6 621.6 502.2 618.7 496.0C615.8 489.8 614.0 485.4 612.7 480.0C611.4 474.6 610.5 468.3 610.7 463.3C610.9 458.3 612.3 454.0 614.0 450.0C615.7 446.0 617.6 442.2 620.7 439.3C623.8 436.4 628.9 434.0 632.7 432.7C636.5 431.4 638.9 431.0 643.3 431.3C647.7 431.6 654.8 432.9 659.3 434.7C663.8 436.5 667.0 438.8 670.0 442.0C673.0 445.2 675.3 449.3 677.3 454.0C679.3 458.7 680.1 464.0 682.0 470.0C683.9 476.0 687.4 485.9 688.7 490.0C690.0 494.1 689.8 493.9 690.0 494.7z" fill="url(#lobeg)"/>
<path d="M611.500 470c1.500 10 5 20 10 30 5 10 11 19.500 18 28 1.500 2 3.500 4 5.500 6l2-1.500c-3-8-4.500-16-4-23-5-7-9-15-12-23-3-8-5-16-5.500-24 0-5 1-10 3-14.500-4 3-7.500 7-10 11.500-1.500 3.500-2 7-1.500 10.500z" fill="#d5cfbe" opacity=".65" filter="url(#b2)"/>
<path d="M640.500 505c.5-7 5-12.500 12-14.800 8-2.500 18-1.500 27 .8 4 1 8 2 11 3" stroke="#cdc7b6" stroke-width="3.500" fill="none" opacity=".6" filter="url(#b2)"/>
<g fill="#fdf8e2" filter="url(#b0)"><path d="M653 443h6v-1.500h7v2h3v3h2v5h-2v3h-2v2.500h-4v-3h-3v-3h-3v-3.500h-4z" opacity=".95"/><path d="M668 467h3.500v5h2v5h2.500v5h2v5h2v5l-5-.5v-3h-3v-4h-3v-5h2v-5h-3z" opacity=".9"/><path d="M629 456.500l4-2.500h5l2 3h4l3 4 1.500 6-1 6-4 2.500-4-1-2-4-4-1-3-5-2-4z" opacity=".5"/><path d="M633.500 478l2.500 6 2 6-2 .5-3-6z" opacity=".5"/></g>
<path d="M679 462c2 9 4.500 18 7.500 26l2.500 6.500-5.500-.8c-3-9.500-5.500-19-7-28z" fill="#d2cbb8" opacity=".5" filter="url(#b1)"/>
<path d="M641 508c0-6 3-11 8-14 5-3 12-4 19-3.500 7 .5 14 2 21 3l-3-9c-8-2-16-2.500-23-1.500-8 1-15 4.500-19 10-3 4.500-4 10-3 15z" fill="#d2ccbb" opacity=".6" filter="url(#b2)"/>
<path d="M643 507c.5-5 3.500-9 8-11.500 5-2.500 11-3.500 17-3 7 .8 14 2 22 2.500" stroke="#e2dcc4" stroke-width="1.500" fill="none" opacity=".7" filter="url(#b1)"/>
<path d="M643.500 509c0-6.500 4-11.500 10.500-13.500 7.500-2.300 16-1.400 24.500 1 5 1.400 9.500 3.300 14 5.500" stroke="#fbf8eb" stroke-width="2.600" fill="none" opacity=".95" filter="url(#b1)"/>
<ellipse cx="669.500" cy="503" rx="3" ry="1.700" fill="#fdfbf0"/>
<ellipse cx="845" cy="486" rx="3" ry="1.800" fill="#fdfbf0" transform="rotate(25 845 486)"/>
</g>

<!-- ===== wedges ===== -->
<path d="M608.800 368.500c2.500-.6 4.500.8 5.500 3.500 1.800 6.500 3.500 13.500 4.300 20 .5 3.500 1 7 .5 9.800-1.500 1.800-3.800 2.800-6 3-3-.5-6-3.500-8-6.600-2-2.500-3.500-5-3.800-7.300-.4-6 .2-12 1.400-18.200.8-2.500 3-3.800 6.100-4.200z" fill="#e8ac64"/>
<path d="M606 374c-1.800 6-2.300 12-1.800 17.500.8 3 3 6 5.800 8.500" stroke="#c98c48" stroke-width="1" fill="none" opacity=".7"/>
<path d="M613 370c2.500 8 4.300 17 5.300 25.500" stroke="#f0bb7a" stroke-width="1.600" fill="none" opacity=".7"/>
<path d="M601.500 389.500l3.500.5 0 4-2.500-.5z" fill="#b69a80"/>
<path d="M814 356.500L824 356c1 0 1.500.8 1.500 2-.3 9-1 18-2.200 27.300-.5 2.500-1.800 4.200-3.300 4.700-1.500.5-3-.5-4.500-1.500-4-2.700-7.500-5.500-10.800-8.500-1-1-1.200-2.500-.5-4 2.500-6 5.500-12 8.800-18 .3-.8.500-1.500 1-1.500z" fill="#e8ac64"/>
<path d="M822.500 358c-.3 9-1 18-2.300 27" stroke="#f0bb7a" stroke-width="1.600" fill="none" opacity=".6"/>
<circle cx="816" cy="361.500" r="1" fill="#c69a6a"/><circle cx="808.300" cy="378.500" r="1" fill="#c69a6a"/><circle cx="815.500" cy="383" r="1" fill="#c69a6a"/>
<!-- ===== ropes wedge → seat ===== -->
<path d="M604.500 399.400L614 454" stroke="#c2a78f" stroke-width="1"/>
<path d="M620.300 400.600L670.700 501.300" stroke="#b89a80" stroke-width="1.100"/>
<path d="M815 383.300L843.600 484.500" stroke="#a89c8a" stroke-width="1.250"/>

</g>
</svg>

<svg class="a" style="left:0;top:0" width="1500" height="825" viewBox="0 0 1500 825" fill="none" stroke-linecap="round" stroke-linejoin="round">
<defs>
<linearGradient id="tgrad" x1="0" x2="1" y1="0" y2="0"><stop offset="0" stop-color="#1c1c1c"/><stop offset="1" stop-color="#d0d0d0"/></linearGradient>
</defs>
<!-- tools header -->
<path d="M6.2 62.3l2.6 2.8-2.6 2.8M10 62.3l2.6 2.8-2.6 2.8" stroke="#d8d8d8" stroke-width="1.2"/>
<path d="M10.5 75v4M12.5 75v4M14.5 75v4M16.5 75v4M18.5 75v4M20.5 75v4M22.5 75v4M24.5 75v4M26.5 75v4M28.5 75v4M30.5 75v4" stroke="#444" stroke-width="1" stroke-linecap="butt"/>
<!-- selected tool bg -->
<rect x="4" y="89" width="32.5" height="26" rx="3" fill="#383838" stroke="#666" stroke-width="1"/>
<!-- corner triangles -->
<g fill="#cfcfcf" stroke="none">
<path d="M34 109v3.4h-3.4z"/><path d="M34 136v3.4h-3.4z"/><path d="M34 163v3.4h-3.4z"/><path d="M34 190v3.4h-3.4z"/><path d="M34 217v3.4h-3.4z"/>
<path d="M34 271v3.4h-3.4z"/><path d="M34 298v3.4h-3.4z"/><path d="M34 325v3.4h-3.4z"/><path d="M34 352v3.4h-3.4z"/><path d="M34 379v3.4h-3.4z"/>
<path d="M34 406v3.4h-3.4z"/><path d="M34 433v3.4h-3.4z"/><path d="M34 460v3.4h-3.4z"/><path d="M34 515v3.4h-3.4z"/><path d="M34 542v3.4h-3.4z"/>
<path d="M34 569v3.4h-3.4z"/><path d="M34 596v3.4h-3.4z"/><path d="M34 623v3.4h-3.4z"/><path d="M34 650v3.4h-3.4z"/><path d="M34 704v3.4h-3.4z"/><path d="M34 816.8v3.4h-3.4z"/>
</g>
<g stroke="#e0e0e0" fill="none">
<!-- move -->
<g stroke-width="1.4"><path d="M19.2 96v13M12.7 102.6h13"/></g>
<path d="M19.2 94.6l2.9 3.4h-5.8zM19.2 110.6l2.9-3.4h-5.8zM11.3 102.6l3.4-2.9v5.8zM27.1 102.6l-3.4-2.9v5.8z" fill="#e0e0e0" stroke="none"/>
<!-- marquee -->
<path d="M11.700 125.600v-3.100h3M17 122.500h2.600M21.900 122.500h2.600M24.800 122.500h3v3.100M27.800 127.500v2.600M27.800 132v3.100h-3M22.500 135.100h-2.600M17.600 135.100h-2.600M14.700 135.100h-3v-3.100M11.700 130.100v-2.600" stroke-width="1.500" stroke-linecap="butt" stroke-linejoin="miter"/>
<!-- lasso -->
<g stroke-width="1.3"><ellipse cx="20.7" cy="155.2" rx="8.4" ry="5.6" transform="rotate(-14 20.7 155.2)"/><circle cx="14.8" cy="160.3" r="1.6"/><path d="M15.6 161.8c1.6 0.8 1.8 2.4 0.6 3.6"/></g>
<!-- magic wand -->
<path d="M13.6 189.9l9.8-8.8" stroke-width="3.6"/><path d="M21.2 183.2l2-1.8" stroke="#535353" stroke-width="1.4"/>
<g fill="#e0e0e0" stroke="none"><path d="M19.1 173.9l.7 2 2 .7-2 .7-.7 2-.7-2-2-.7 2-.7zM27.5 173.6l.9 2.3 2.3.9-2.3.9-.9 2.3-.9-2.3-2.3-.9 2.3-.9zM28.6 180.4l.6 1.7 1.7.6-1.7.6-.6 1.7-.6-1.7-1.7-.6 1.7-.6z"/></g>
<!-- crop -->
<g stroke-width="2" stroke-linecap="butt" stroke-linejoin="miter"><path d="M14.7 201.4v13.7h9.2M25.9 215.1h3M12.1 205.3h12.1v9M9.3 205.3h1.6M24.2 216v2.8"/></g>
<!-- frame -->
<g stroke-width="1.2"><rect x="12.5" y="231.2" width="15.6" height="12.6"/><path d="M12.5 231.2l15.6 12.6M28.1 231.2l-15.6 12.6"/></g>
<g fill="#e0e0e0" stroke="none"><circle cx="12.5" cy="231.2" r="1.3"/><circle cx="28.1" cy="231.2" r="1.3"/><circle cx="12.5" cy="243.8" r="1.3"/><circle cx="28.1" cy="243.8" r="1.3"/></g>
<!-- eyedropper -->
<path d="M20.3 262.6l-7.4 7.4c-.7.7-.7 1.6 0 2.200.7.700 1.600.700 2.300 0l7.400-7.400" stroke-width="1.2"/>
<path d="M19.400 261.100l5 5M22 263.700l3.800-3.800" stroke-width="2.6"/><path d="M24.300 261.200l1.800-1.800" stroke-width="3.600"/>
<!-- healing -->
<circle cx="15.800" cy="287.700" r="5.300" stroke-width="1.200" stroke-dasharray="2.400 1.800"/>
<path d="M14.800 296.400l10-9.300" stroke-width="6.400"/>
<g fill="#535353" stroke="none"><circle cx="19.800" cy="290.300" r=".75"/><circle cx="21.600" cy="292.200" r=".75"/><circle cx="18" cy="291.900" r=".75"/><circle cx="19.800" cy="293.800" r=".75"/><circle cx="21.500" cy="288.800" r=".75"/><circle cx="23.300" cy="290.600" r=".75"/></g>
<!-- brush -->
<g fill="#e0e0e0" stroke="none"><path d="M27 310.600l-3.700 8.200-2.500 2.400-2.300-2.200 2.200-2.600z"/><path d="M17.600 319.800l2.400 2.300c.8 2.800-1.200 4.600-3.600 4.400-1.600 0-3.300.4-4.900.5 1.400-.8 2-1.600 2.300-3.300.3-2.500 1.800-3.900 3.800-3.900z"/></g>
<!-- stamp -->
<g fill="#e0e0e0" stroke="none"><circle cx="20.200" cy="341.300" r="3.400"/><path d="M18.700 343.500h3v3.600c0 .9.600 1.600 1.500 1.600h2.600c.6 0 1 .4 1 1v2.400h-13.400v-2.400c0-.6.400-1 1-1h2.600c.900 0 1.700-.700 1.700-1.600z"/><rect x="14.600" y="353" width="11.400" height="1.300"/></g>
<!-- history brush -->
<g fill="#e0e0e0" stroke="none"><path d="M28 365.200l-3.500 8.200-2.300 2.200-2.200-2.100 2-2.400z"/><path d="M19 374.600l2.300 2.200c.7 2.600-1.100 4.300-3.300 4.200-1.600 0-3.500.4-5.200.5 1.400-.800 2.100-1.600 2.400-3.200.3-2.400 1.800-3.700 3.800-3.700z"/><path d="M10.300 371.900l3.200-3.700 2.400 3.700z"/><circle cx="26.400" cy="372.100" r=".6"/><circle cx="25.900" cy="374.500" r=".6"/><circle cx="24.900" cy="376.700" r=".6"/><circle cx="23.300" cy="378.600" r=".6"/></g>
<path d="M14.200 369.700c2-2.200 5-2.600 7.300-.9" stroke-width="1.100"/>
<!-- eraser -->
<path d="M22.400 393.200l4.500 4.600-6.500 5.800-4.400-4.900z" fill="#e0e0e0" stroke="#e0e0e0" stroke-width="1"/>
<path d="M16 398.700l-3.900 3.400c-.5.500-.5 1 0 1.500l2.600 2.900h11.900M20.400 403.600l-3.300 2.900" stroke-width="1.200"/>
<!-- gradient -->
<rect x="11.800" y="420.800" width="15.800" height="11.600" fill="url(#tgrad)" stroke-width="1.300" stroke-linejoin="miter"/>
<!-- blur drop -->
<path d="M19.600 446.600c1.300 3 5.500 6.500 5.500 9.900 0 2.800-2.300 4.900-5.400 4.900-3 0-5.300-2.100-5.300-4.900 0-3.400 4-6.900 5.200-9.900z" fill="#e0e0e0" stroke="none"/>
<!-- adjustment brush -->
<g fill="#e0e0e0" stroke="none"><path d="M25.900 472.600l-3.400 7.700-2.300 2.300-2.100-2 2-2.400z"/><path d="M17.100 481.500l2.200 2.100c.700 2.500-1 4.200-3.100 4.100-1.500 0-3.400.4-5 .5 1.300-.800 2-1.500 2.300-3.100.3-2.300 1.700-3.600 3.600-3.600z"/></g>
<circle cx="24.700" cy="485.300" r="4" stroke-width="1.200"/><path d="M21.900 488.100l5.600-5.600a4 4 0 0 1-5.600 5.600z" fill="#e0e0e0" stroke="none"/>
<!-- dodge -->
<circle cx="21.600" cy="506.600" r="5.500" fill="#e0e0e0" stroke="none"/><path d="M18 510.400l-6 5.800" stroke-width="1.900"/>
<!-- pen -->
<path d="M13 543.300l2.400-8.800 7.200-4.300 4 4.200-4.400 7z" stroke-width="1.200"/><path d="M13.300 542.900l5.600-5.600" stroke-width="1.100"/><circle cx="19.500" cy="536.800" r="1.400" fill="#e0e0e0" stroke="none"/>
<path d="M23.500 528.300l4.700 4.900-1.600 1.500-4.700-4.900z" fill="#e0e0e0" stroke="#e0e0e0" stroke-width=".8"/>
<!-- type -->
<path d="M14.700 555.500h12.400v3.400h-1.300c-.2-1.400-.8-1.900-2.200-1.900h-1.500v10.300c0 1.100.4 1.400 1.700 1.400v1.300h-5.800v-1.300c1.300 0 1.700-.3 1.700-1.400v-10.300h-1.500c-1.400 0-2 .5-2.200 1.900h-1.300z" fill="#e0e0e0" stroke="none"/>
<!-- path select arrow -->
<path d="M15.100 581.600v14.500l3.600-3.300 2.700 5.900 1.900-.9-2.700-5.700 4.800-.4z" fill="#e0e0e0" stroke="none"/>
<!-- rectangle -->
<rect x="11.800" y="610" width="15.800" height="12.200" fill="#6f6f6f" stroke-width="1.300" stroke-linejoin="miter"/>
<!-- hand -->
<path d="M16.400 645.600v-7.600c0-1.300 1.700-1.300 1.700 0v5.300h.7v-6.800c0-1.300 1.800-1.300 1.800 0v6.800h.7v-6c0-1.300 1.800-1.300 1.800 0v6.600h.7v-4c0-1.300 1.700-1.300 1.700 0 0 3.300-.2 6-1 8.300-.8 2.400-2.300 4-4.800 4-2.600 0-4-1.400-5.500-3.800l-4-6.200c-.6-1 .7-1.900 1.500-1z" fill="#e0e0e0" stroke="none"/>
<!-- zoom -->
<circle cx="17.500" cy="668.700" r="5.800" stroke-width="1.400"/><path d="M21.900 673l5.600 5.300" stroke-width="2"/>
<!-- dots -->
<g fill="#e0e0e0" stroke="none"><circle cx="13.300" cy="697.900" r="2"/><circle cx="19.700" cy="697.900" r="2"/><circle cx="26" cy="697.900" r="2"/></g>
<!-- default colors -->
<rect x="7" y="721.500" width="8" height="7" stroke-width="1.200" fill="#535353" stroke-linejoin="miter"/>
<rect x="3.800" y="718" width="8" height="7.400" fill="#000" stroke="#d8d8d8" stroke-width="1" stroke-linejoin="miter"/>
<!-- swap arrow -->
<path d="M27 720.200c3.300-.3 5.200 1.600 5.200 4.800" stroke-width="1.800" stroke-linecap="butt"/><path d="M24 720.300l4.300-3.200v6.200zM32.200 728.600l-3.100-4.300h6.200z" fill="#e0e0e0" stroke="none"/>
</g>
<!-- swatches -->
<rect x="15.300" y="744.600" width="19.700" height="19.400" fill="#1e1e1e" stroke="none"/>
<rect x="16.300" y="745.600" width="17.700" height="17.400" fill="#8c7661" stroke="#e6e6e6" stroke-width="1"/>
<rect x="4.600" y="733.600" width="19.900" height="19.900" fill="#1e1e1e" stroke="none"/>
<rect x="5.600" y="734.600" width="17.900" height="17.900" fill="#8c7661" stroke="#e6e6e6" stroke-width="1"/>
<!-- quick mask -->
<rect x="10.600" y="776.500" width="17" height="12.600" stroke="#e0e0e0" stroke-width="1.200" stroke-linejoin="miter"/><circle cx="19" cy="782.700" r="4.200" stroke="#e0e0e0" stroke-width="1" stroke-dasharray="1.200 1.100"/>
<!-- screen mode -->
<rect x="11" y="807.500" width="11.400" height="8.600" stroke="#e0e0e0" stroke-width="1.200" fill="#535353" stroke-linejoin="miter"/>
<rect x="16.400" y="804.400" width="11" height="8.400" stroke="#e0e0e0" stroke-width="1.200" fill="#535353" stroke-linejoin="miter"/>
</svg>

<svg class="a" style="left:0;top:0" width="1500" height="825" viewBox="0 0 1500 825" fill="none" stroke-linecap="round" stroke-linejoin="round">
<!-- grip at left of options bar -->
<path d="M5 31.500h2.500M5 33.500h2.500M5 35.500h2.500M5 37.500h2.500M5 39.500h2.500M5 41.500h2.500M5 43.500h2.500M5 45.500h2.500M5 47.500h2.500M5 49.500h2.500" stroke="#454545" stroke-width="1" stroke-linecap="butt"/>
<!-- home -->
<path d="M29 33.600l8.700 7.800h-2.300v6.700h-4.400v-4.600h-4v4.600h-4.400v-6.700h-2.300z" fill="#e4e4e4"/>
<!-- move icon in options -->
<g stroke="#dcdcdc" stroke-width="1.300"><path d="M71.200 35v12.600M64.900 41.300h12.600"/></g>
<path d="M71.200 33.700l2.700 3.100h-5.400zM71.200 48.900l2.700-3.100h-5.400zM63.600 41.300l3.100-2.700v5.400zM78.800 41.300l-3.100-2.700v5.400z" fill="#dcdcdc"/>
<path d="M91 40.600l3.200 3 3.200-3" stroke="#dcdcdc" stroke-width="1.200"/>
<!-- check marks -->
<path d="M116.400 41.300l2.300 2.500 4-4.800" stroke="#2a2a2a" stroke-width="1.800"/>
<path d="M271.400 41.300l2.300 2.500 4-4.800" stroke="#2a2a2a" stroke-width="1.800"/>
<!-- dropdown chevron -->
<path d="M248.400 40.300l3.300 3.100 3.300-3.100" stroke="#dcdcdc" stroke-width="1.200"/>
<!-- align icons (dim) -->
<g fill="#9a9a9a" stroke="none">
<rect x="433" y="33.200" width="1.200" height="15.400"/><rect x="435.600" y="36" width="7" height="4"/><rect x="435.600" y="42.400" width="11.200" height="4"/>
<rect x="466.200" y="33.200" width="1.200" height="15.400"/><rect x="463" y="36" width="7.600" height="4"/><rect x="460.800" y="42.400" width="12" height="4"/>
<rect x="500" y="33.200" width="1.200" height="15.400"/><rect x="491.400" y="36" width="7" height="4"/><rect x="487.200" y="42.400" width="11.200" height="4"/>
<rect x="517" y="35.600" width="17.400" height="1.200"/><rect x="517" y="45.400" width="17.400" height="1.200"/><rect x="520" y="38.800" width="11.400" height="4.600"/>
<rect x="554.600" y="34.400" width="14.600" height="1.200"/><rect x="556.600" y="37" width="4" height="10.800"/><rect x="563" y="37" width="4" height="6.800"/>
<rect x="581.800" y="40.600" width="14.200" height="1.200"/><rect x="584" y="35.400" width="4" height="11.600"/><rect x="590.200" y="37.600" width="4" height="7.400"/>
<rect x="608.800" y="46.400" width="14.800" height="1.200"/><rect x="611" y="34.200" width="4" height="10.800"/><rect x="617.200" y="38.200" width="4" height="6.800"/>
<rect x="641.800" y="33" width="1.200" height="15.600"/><rect x="651.600" y="33" width="1.200" height="15.600"/><rect x="645" y="36" width="4.600" height="9.800"/>
</g>
<!-- dots -->
<g fill="#dcdcdc"><circle cx="677.200" cy="40.600" r="1.900"/><circle cx="684" cy="40.600" r="1.900"/><circle cx="690.800" cy="40.600" r="1.900"/></g>
<!-- gear -->
<g transform="translate(724.400 41)"><g fill="#dcdcdc"><circle r="5.200"/><g id="gt"><rect x="-1.500" y="-7.300" width="3" height="14.600" rx=".6"/></g><use href="#gt" transform="rotate(45)"/><use href="#gt" transform="rotate(90)"/><use href="#gt" transform="rotate(135)"/></g><circle r="2.500" fill="#535353"/></g>
<path d="M729.600 48.400h3.400l-1.700 2z" fill="#dcdcdc"/>
<!-- right side: share -->
<path d="M1327.400 38.400h-3.800v10.300h15.600v-10.300h-3.800" stroke="#e0e0e0" stroke-width="1.700" stroke-linecap="butt" stroke-linejoin="miter"/>
<path d="M1331.400 44v-8" stroke="#e0e0e0" stroke-width="1.700" stroke-linecap="butt"/><path d="M1331.400 31.800l4.300 4.800h-8.600z" fill="#e0e0e0"/>
<!-- bell -->
<path d="M1369.300 32.200c.7 0 1.100.5 1.100 1.100 2.400.7 3.700 2.800 3.700 5.400 0 3.600.9 5.600 2.900 7.400v.9h-15.400v-.9c2-1.800 2.900-3.800 2.900-7.400 0-2.600 1.300-4.700 3.700-5.400 0-.6.400-1.100 1.100-1.100zM1367.600 48.200h3.400c0 1-.7 1.700-1.700 1.700s-1.700-.7-1.700-1.700z" fill="#b4b4b4"/>
<!-- search -->
<circle cx="1402.200" cy="40.200" r="5.700" stroke="#e0e0e0" stroke-width="1.500"/><path d="M1406.400 44.500l4 4" stroke="#e0e0e0" stroke-width="1.900"/>
<!-- lightbulb -->
<circle cx="1436.400" cy="40.800" r="12.700" fill="#4f4f4f" stroke="#3a68ad" stroke-width="5"/>
<g stroke="#e6e6e6" stroke-width="1.100"><path d="M1436.400 33.600c2.600 0 4.400 1.900 4.400 4.300 0 1.700-.9 2.700-1.600 3.700-.5.700-.7 1.400-.7 2.400h-4.200c0-1-.2-1.700-.7-2.400-.7-1-1.600-2-1.600-3.700 0-2.400 1.800-4.300 4.400-4.300zM1434.500 45.600h3.800M1434.900 47.200h3M1436.400 32v-1.600M1441.200 33.700l1.200-1.200M1431.600 33.700l-1.200-1.200M1443 38.400h1.700M1429.800 38.400h-1.700"/></g>
<!-- layout -->
<rect x="1459.400" y="35.600" width="15.800" height="12.200" rx="1" stroke="#e0e0e0" stroke-width="1.400"/>
<g fill="#e0e0e0"><rect x="1461.700" y="38.500" width="1.500" height="1.500"/><rect x="1461.700" y="41" width="1.500" height="1.500"/><rect x="1461.700" y="43.500" width="1.500" height="1.500"/></g>
<path d="M1486.800 39.600l3.300 3.200 3.300-3.200" stroke="#e0e0e0" stroke-width="1.200"/>
<!-- tab close x -->
<path d="M51.800 70.400l5.200 5.200M57 70.400l-5.200 5.200" stroke="#b8b8b8" stroke-width="1"/>
</svg>

<div class="a" style="left:44px;top:806px;width:62px;height:17px;background:#424242"></div>
<div class="a" style="left:106px;top:806px;width:192px;height:17px;background:#4b4b4b;border-left:1px solid #3c3c3c;border-right:1px solid #3c3c3c"></div>
<div class="a" style="left:298px;top:806px;width:1202px;height:17px;background:#454545"></div>
<div class="a" style="left:52.500px;top:807.500px;font-size:13px;color:#ececec;white-space:nowrap">54.72%</div>
<div class="a" style="left:124px;top:808px;font-size:11.400px;color:#cdcdcd;white-space:nowrap">2812 px x 2250 px (300 ppi)</div>
<svg class="a" style="left:0;top:0" width="1500" height="825" viewBox="0 0 1500 825" fill="none"><path d="M287.600 811l3.600 4.600-3.600 4.600" stroke="#d0d0d0" stroke-width="1.100" stroke-linecap="round" stroke-linejoin="round"/>
<rect x="630.800" y="809.400" width="487" height="10.500" rx="5.250" fill="#646464"/>
<rect x="1485.200" y="309.300" width="11" height="271.600" rx="5.500" fill="#6b6b6b"/>
<path d="M45 780.700h12" stroke="#e0e0e0" stroke-width="1"/>
</svg>
<div class="a" style="left:0;top:823px;width:1500px;height:2px;background:linear-gradient(90deg,#2b2b2b,#3a3328 15%,#2a2f2a 30%,#3a3a38 45%,#1e1e1e 60%,#33302c 75%,#2c2a2a 90%,#2b2b2b)"></div>

<style>
.pn{background:#535353;box-shadow:0 1px 3px rgba(0,0,0,.45)}
.pt{color:#f0f0f0;font-size:10.9px;font-weight:bold;white-space:nowrap;line-height:12px}
</style>
<div class="a" style="left:1180.500px;top:122.500px;width:290px;height:15px;background:#464646;border-radius:4px 4px 0 0;border:1px solid #3c3c3c;border-bottom:none"></div>
<div class="a" style="left:1180.500px;top:136px;width:42px;height:72px;background:#383838;box-shadow:0 1px 3px rgba(0,0,0,.5)"></div><div class="a" style="left:1345px;top:136px;width:126px;height:101px;background:#383838;box-shadow:0 1px 3px rgba(0,0,0,.5)"></div>
<div class="a" style="left:1220px;top:136px;width:127px;height:231px;background:#383838;box-shadow:0 1px 3px rgba(0,0,0,.5)"></div>
<div class="a pn" style="left:1181px;top:136.500px;width:39px;height:71px"></div>
<div class="a pn" style="left:1222.800px;top:136.500px;width:122.700px;height:128.600px"></div>
<div class="a pn" style="left:1222.800px;top:266.600px;width:122.700px;height:100.400px"></div>
<div class="a pn" style="left:1347.900px;top:136.500px;width:122.600px;height:100px"></div>
<div class="a pt" style="left:1261.600px;top:155.400px">Color</div>
<div class="a pt" style="left:1261.600px;top:184.600px">Swatches</div>
<div class="a pt" style="left:1261.600px;top:213.800px">Gradients</div>
<div class="a pt" style="left:1261.600px;top:243px">Patterns</div>
<div class="a pt" style="left:1261.600px;top:285.600px">Properties</div>
<div class="a pt" style="left:1261.600px;top:314.800px">Adjustments</div>
<div class="a pt" style="left:1261.600px;top:344px">Libraries</div>
<div class="a pt" style="left:1386.600px;top:155.400px">Layers</div>
<div class="a pt" style="left:1386.600px;top:184.600px">Channels</div>
<div class="a pt" style="left:1386.600px;top:213.800px">Paths</div>
<svg class="a" style="left:0;top:0" width="1500" height="825" viewBox="0 0 1500 825" fill="none" stroke-linecap="round" stroke-linejoin="round">
<defs><linearGradient id="pgrad" x1="0" x2="1" y1="0" y2="0"><stop offset="0" stop-color="#3a3a3a"/><stop offset="1" stop-color="#d4d4d4"/></linearGradient></defs>
<!-- header icons -->
<path d="M1186.600 127.400l5.800 5.800M1192.400 127.400l-5.800 5.800" stroke="#e0e0e0" stroke-width="1.200"/>
<g stroke="#cfcfcf" stroke-width="1.100"><path d="M1207.200 127.400l2.600 2.600-2.600 2.600M1211 127.400l2.600 2.600-2.600 2.600M1332.200 127.400l2.600 2.600-2.600 2.600M1336 127.400l2.600 2.600-2.600 2.600M1455.200 127.400l2.600 2.600-2.600 2.600M1459 127.400l2.600 2.600-2.600 2.600"/></g>
<!-- grips -->
<g stroke="#444" stroke-width="1" stroke-linecap="butt">
<path d="M1190.5 140.300v3.400M1192.5 140.300v3.400M1194.5 140.300v3.400M1196.5 140.300v3.400M1198.5 140.300v3.400M1200.5 140.300v3.400M1202.5 140.300v3.400M1204.5 140.300v3.400M1206.5 140.300v3.400M1208.5 140.300v3.400M1210.5 140.300v3.400"/>
<path d="M1274.500 140.300v3.400M1276.500 140.300v3.400M1278.500 140.300v3.400M1280.500 140.300v3.400M1282.500 140.300v3.400M1284.500 140.300v3.400M1286.500 140.300v3.400M1288.500 140.300v3.400M1290.500 140.300v3.400M1292.500 140.300v3.400M1294.500 140.300v3.400"/>
<path d="M1273.5 270v3.6M1275.5 270v3.6M1277.5 270v3.6M1279.5 270v3.6M1281.5 270v3.6M1283.5 270v3.6M1285.5 270v3.6M1287.5 270v3.6M1289.5 270v3.6M1291.5 270v3.6M1293.5 270v3.6"/>
<path d="M1398.5 140.3v3.4M1400.5 140.3v3.4M1402.5 140.3v3.4M1404.5 140.3v3.4M1406.5 140.3v3.4M1408.5 140.3v3.4M1410.5 140.3v3.4M1412.5 140.3v3.4M1414.5 140.3v3.4M1416.5 140.3v3.4M1418.5 140.3v3.4"/>
</g>
<!-- col1: brush settings icon -->
<g fill="#dadada">
<rect x="1190.200" y="151.200" width="1.800" height="1.800"/><rect x="1190.200" y="154.400" width="1.800" height="1.800"/><rect x="1190.200" y="157.600" width="1.800" height="1.800"/>
<rect x="1193.400" y="151.500" width="4.600" height="1.200"/><rect x="1193.400" y="154.700" width="4.600" height="1.200"/><rect x="1193.400" y="157.900" width="3.400" height="1.200"/>
<path d="M1212.600 153.200c.6.400.6 1 .2 1.600l-5.400 7-2.800 2-2.200-2.200 2-2.800 6.800-5.400c.5-.4 1-.5 1.400-.2z"/><path d="M1201 161.800l2.400 2.400c.6 2.700-1.400 4.500-3.800 4.500-2 0-4 .2-6 .2 1.600-.9 2.500-1.800 3-3.300.7-2.500 2.300-3.900 4.400-3.800z"/>
<!-- col1: brushes icon -->
<path d="M1188.600 182.600c3-1.200 6.400-1.200 8.800.2 1.400.8 1.400 2.600 0 3.400-2.400 1.400-6.200.4-8.800-3.600z"/><rect x="1199.800" y="183.800" width="10.800" height="1.700"/>
<rect x="1192" y="192.200" width="10" height="1.700"/><path d="M1203.200 193.100c0-3.200 3.200-4.800 6.600-5.500 1.400 3.700 1.400 7.300 0 10.900-3.400-.7-6.600-2.300-6.600-5.400z"/>
</g>
<!-- color palette -->
<path d="M1243.400 153.600c5.200 0 8.600 3 8.600 6.400 0 2.300-1.600 3.500-3.800 3.500-1.100 0-1.800.5-1.800 1.300 0 .5.300.9.300 1.300 0 .6-.7 1-3.300 1-6.200 0-10.400-2.700-10.400-6.700 0-3.800 4.200-6.800 10.400-6.800z" fill="#dadada"/>
<g fill="#535353"><circle cx="1237" cy="161.600" r="1.350"/><circle cx="1239.800" cy="157.800" r="1.350"/><circle cx="1244.400" cy="156.400" r="1.350"/><circle cx="1248.400" cy="158.600" r="1.350"/><circle cx="1241.400" cy="164.200" r="1.500"/></g>
<!-- swatches -->
<rect x="1234.500" y="182.200" width="16" height="12.600" fill="#dadada"/>
<g><rect x="1236.0" y="183.7" width="3.8" height="2.6" fill="#b4b4b4"/><rect x="1240.7" y="183.7" width="3.8" height="2.6" fill="#8c8c8c"/><rect x="1245.4" y="183.7" width="3.8" height="2.6" fill="#4c4c4c"/><rect x="1236.0" y="187.2" width="3.8" height="2.6" fill="#8c8c8c"/><rect x="1240.7" y="187.2" width="3.8" height="2.6" fill="#5c5c5c"/><rect x="1245.4" y="187.2" width="3.8" height="2.6" fill="#3c3c3c"/><rect x="1236.0" y="190.7" width="3.8" height="2.6" fill="#2c2c2c"/><rect x="1240.7" y="190.7" width="3.8" height="2.6" fill="#242424"/><rect x="1245.4" y="190.7" width="3.8" height="2.6" fill="#1e1e1e"/></g>
<!-- gradients -->
<rect x="1234.700" y="211.400" width="15.600" height="12.400" fill="url(#pgrad)" stroke="#dadada" stroke-width="1.200" stroke-linejoin="miter"/>
<!-- patterns -->
<rect x="1234.200" y="240.400" width="16.800" height="13.600" fill="#dadada"/>
<g stroke="#4a4a4a" stroke-width="1.100" stroke-linecap="butt"><path d="M1236 243.800h3M1241 242.200v3.200M1243 243.800h3.400M1248 242.200v3.200M1236.600 246v3M1238.400 247.400h3.200M1243.600 246v3M1245.400 247.400h3.200M1236 251h3M1241 249.600v3.200M1243 251h3.400M1248 249.600v3.200"/></g>
<!-- properties -->
<g stroke="#dadada" stroke-width="1.100"><path d="M1234.200 284.400h2.400M1240.800 284.400h10M1234.200 290.200h9.600M1248 290.200h2.800M1234.200 296h4.200M1242.600 296h8.200"/><circle cx="1238.700" cy="284.400" r="2"/><circle cx="1245.900" cy="290.200" r="2"/><circle cx="1240.500" cy="296" r="2"/></g>
<!-- adjustments -->
<circle cx="1241.800" cy="319.700" r="6.900" stroke="#dadada" stroke-width="1.200"/><path d="M1236.900 324.600l9.800-9.800a6.900 6.900 0 0 1-9.800 9.800z" fill="#dadada"/>
<!-- libraries -->
<path d="M1237 340.400h10.500c1 0 1.500.5 1.500 1.500M1234.600 353v-11c0-1 .6-1.600 1.600-1.600" stroke="#b0b0b0" stroke-width="1.100"/>
<rect x="1236.600" y="342.600" width="14" height="13.400" rx="1.300" stroke="#dadada" stroke-width="1.200" fill="#535353"/><path d="M1243.400 342.800h4.400v6.600l-2.200-1.900-2.200 1.900z" fill="#dadada"/>
<!-- layers -->
<path d="M1367.400 151l8.600 4.800-8.600 4.800-8.600-4.800z" fill="#dadada"/><path d="M1361.400 160.400l6 3.300 6-3.300 2.600 1.500-8.600 4.800-8.600-4.800z" fill="#dadada"/>
<!-- channels -->
<circle cx="1367.200" cy="186.800" r="5.800" fill="#8e8e8e"/><circle cx="1363.400" cy="191.600" r="5.800" fill="#cfcfcf" fill-opacity=".92"/><circle cx="1370.800" cy="191.600" r="5.800" fill="#b4b4b4" fill-opacity=".8"/>
<path d="M1367.200 186.600c2 1.100 2.300 3.600 1.600 5.200h-3.200c-.7-1.600-.4-4.100 1.600-5.200z" fill="#555"/>
<!-- paths -->
<g stroke="#dadada" stroke-width="1.100"><path d="M1358.400 212.700h17.600M1361 222c0-6 2.600-9.300 6.200-9.300s6.200 3.300 6.200 9.300"/><rect x="1359.200" y="222.200" width="3.400" height="3.400" fill="#535353" stroke-linejoin="miter"/><rect x="1372" y="222.200" width="3.400" height="3.400" fill="#535353" stroke-linejoin="miter"/></g>
<g fill="#dadada"><rect x="1356.400" y="211" width="3.600" height="3.600"/><rect x="1374.200" y="211" width="3.600" height="3.600"/><rect x="1365.600" y="211.100" width="3.200" height="3.200"/></g>
</svg>

</div></body></html>
